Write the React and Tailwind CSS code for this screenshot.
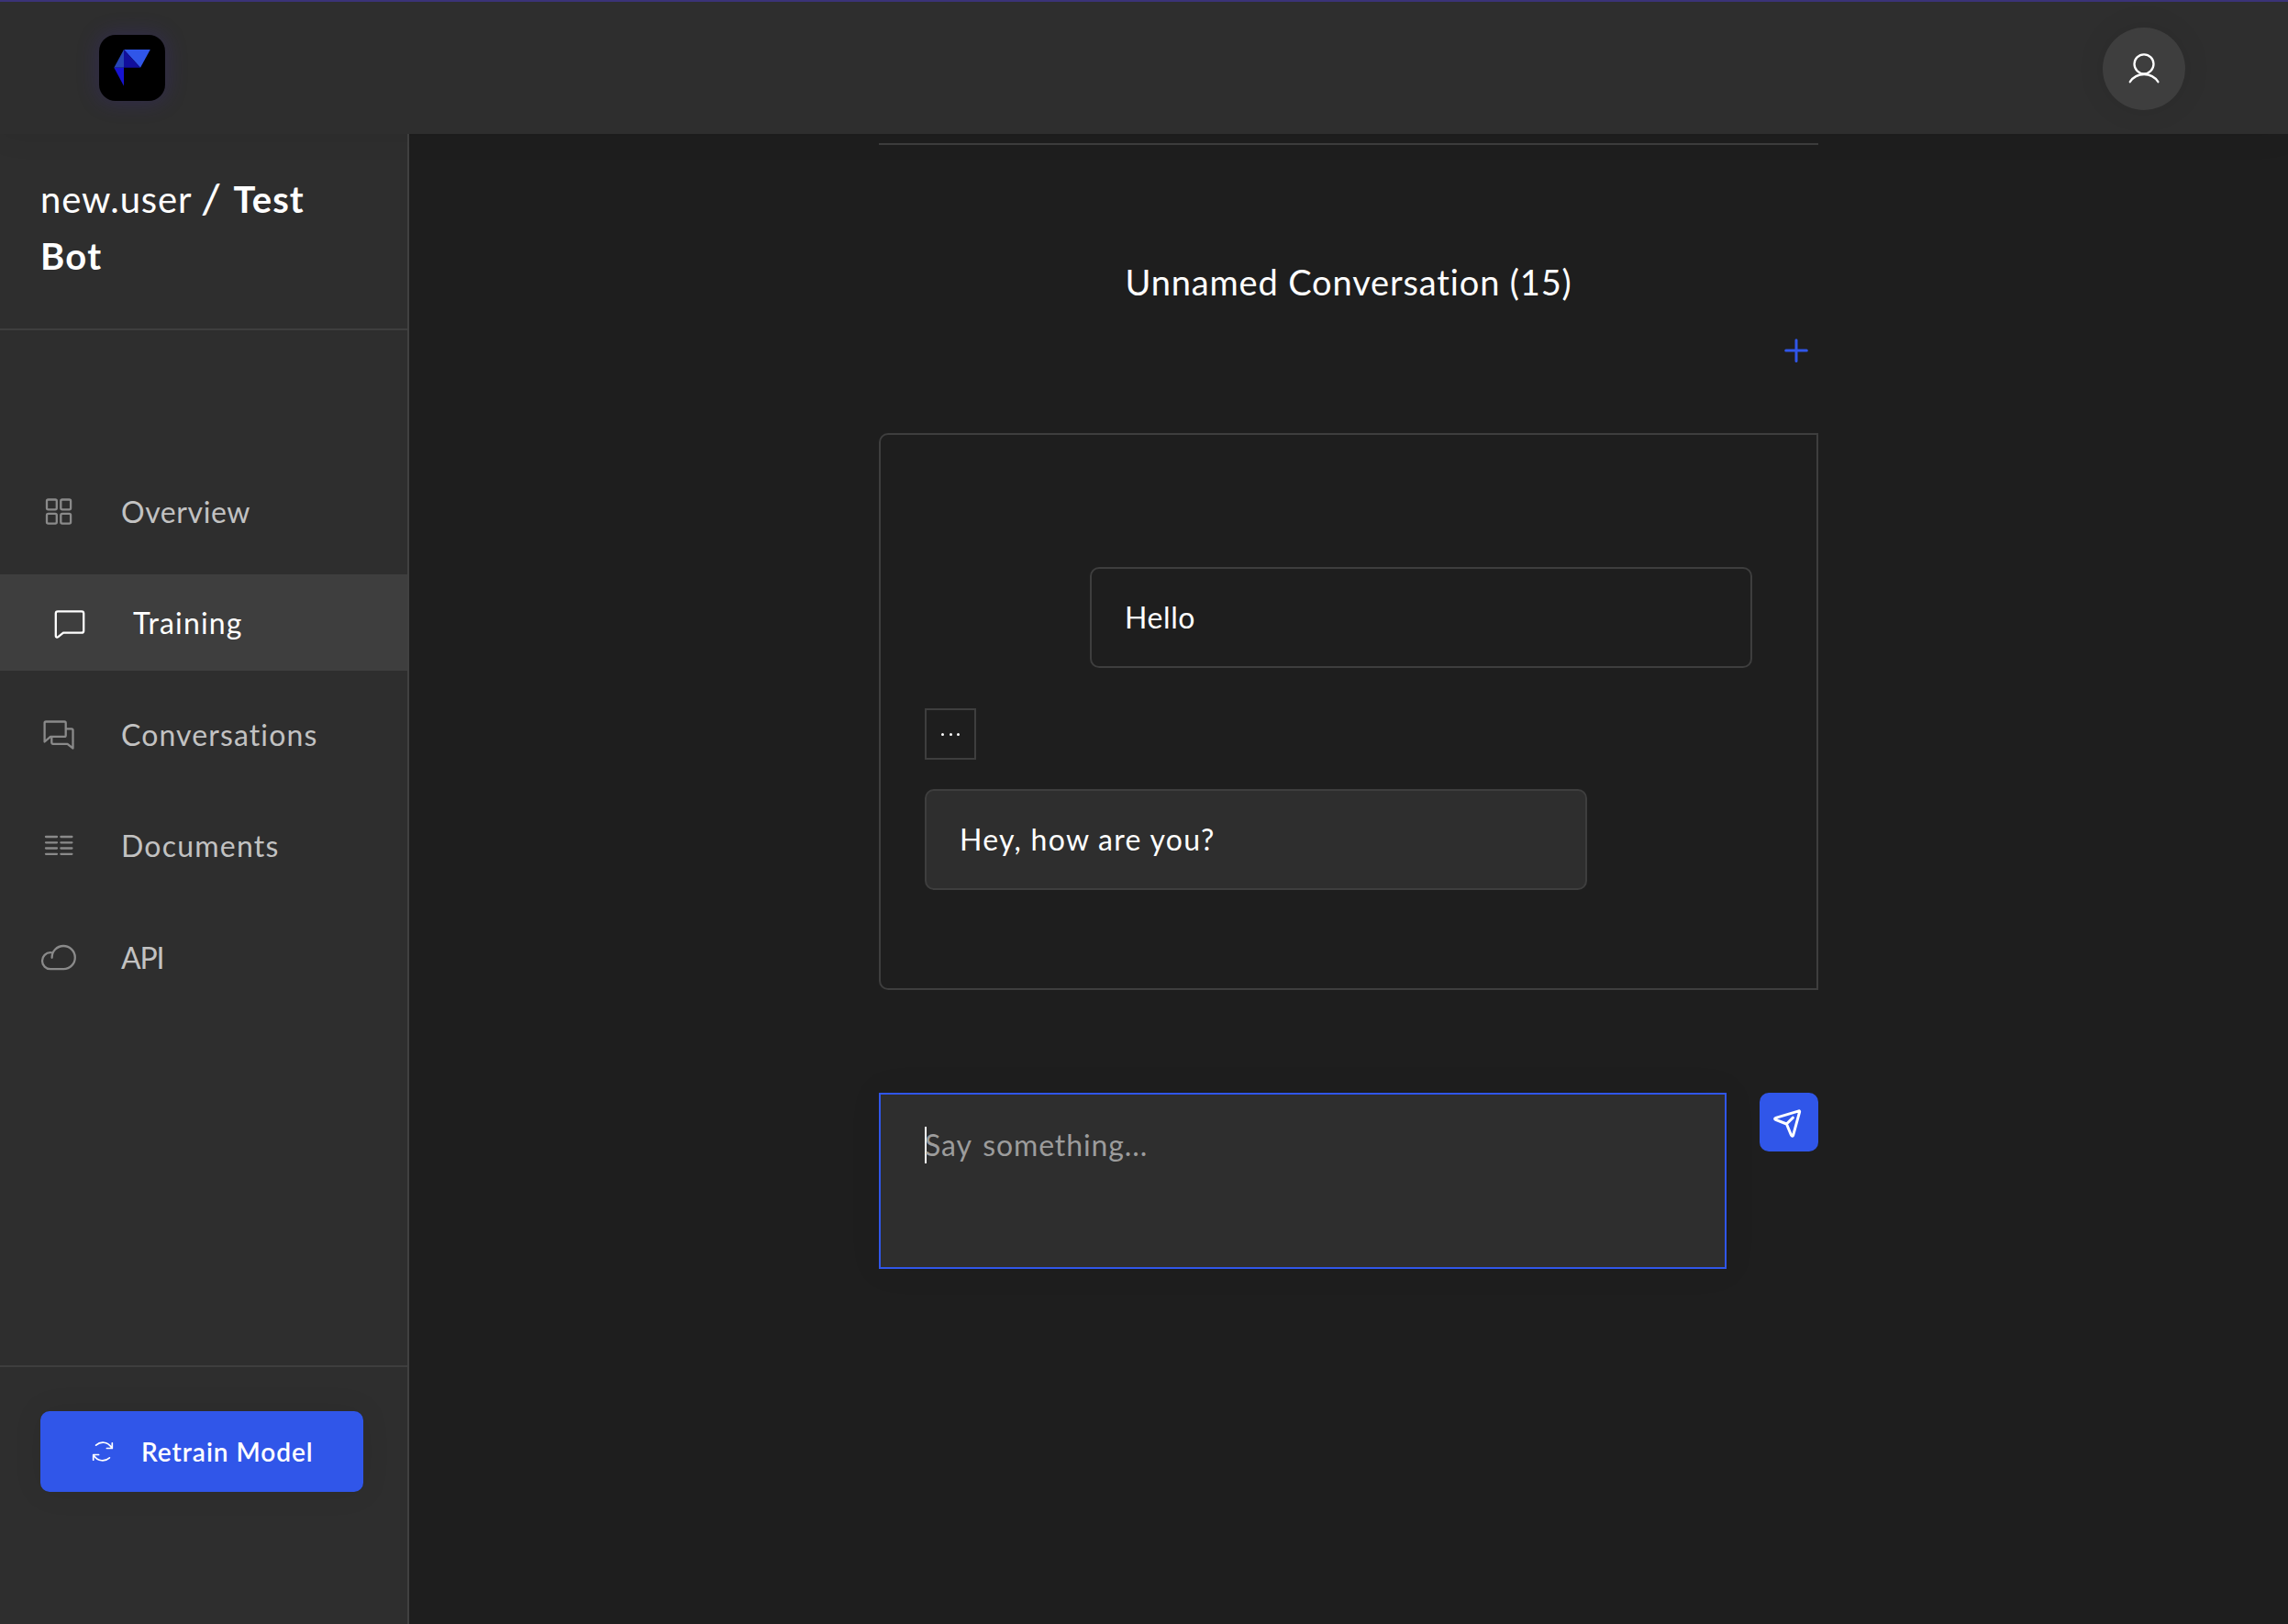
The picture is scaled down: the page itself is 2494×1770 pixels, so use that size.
import React from 'react';

const stroke = {
  fill: 'none',
  stroke: 'currentColor',
  strokeWidth: 2.3,
  strokeLinecap: 'round',
  strokeLinejoin: 'round',
};

const Logo = () => (
  <div className="flex h-[72px] w-[72px] items-center justify-center rounded-[18px] bg-black shadow-[0_0_22px_2px_rgba(60,40,150,0.3)]">
    <svg width="72" height="72" viewBox="108 38 72 72">
      <path d="M135 54L124.3 73.8H135z" fill="#2645b5" />
      <path d="M135 54h28.8L153 73.8z" fill="#3056e9" />
      <path d="M135 54l18 19.8H135z" fill="#110e9c" />
      <path d="M124.3 73.8H135v20z" fill="#1713d0" />
    </svg>
  </div>
);

const UserIcon = () => (
  <svg width="90" height="90" viewBox="2292 30 90 90" {...stroke}>
    <circle cx="2337" cy="69.8" r="10.5" />
    <path d="M2321.8 89.2a18.4 18.4 0 0 1 30.6 0" />
  </svg>
);

const GridIcon = () => (
  <svg width="40" height="40" viewBox="44 536.5 40 40" {...stroke}>
    <rect x="51" y="544" width="10.8" height="10.8" rx="1.6" />
    <rect x="66.3" y="544" width="10.8" height="10.8" rx="1.6" />
    <rect x="51" y="559.3" width="10.8" height="10.8" rx="1.6" />
    <rect x="66.3" y="559.3" width="10.8" height="10.8" rx="1.6" />
  </svg>
);

const ChatIcon = () => (
  <svg width="40" height="40" viewBox="56 658 40 40" {...stroke}>
    <path d="M63 666.3h26a2.2 2.2 0 0 1 2.2 2.2v19a2.2 2.2 0 0 1-2.2 2.2H69l-5.6 4.5c-1.3 1-2.6.3-2.6-1v-24.7a2.2 2.2 0 0 1 2.2-2.2z" />
  </svg>
);

const ChatsIcon = () => (
  <svg width="40" height="40" viewBox="44 779.5 40 40" {...stroke}>
    <path d="M50 786h20.3a1.4 1.4 0 0 1 1.4 1.4v13.6a1.4 1.4 0 0 1-1.4 1.4H55l-6.4 5.6v-20.6a1.4 1.4 0 0 1 1.4-1.4z" />
    <path d="M72 793.8h6a1.5 1.5 0 0 1 1.5 1.5V815l-6-4.7H57.8a1.5 1.5 0 0 1-1.5-1.5V803" />
  </svg>
);

const ListIcon = () => (
  <svg width="40" height="40" viewBox="44 901 40 40" {...stroke}>
    <path d="M50 912h12M66.4 912h12M50 918.3h12M66.4 918.3h12M50 924.5h12M66.4 924.5h12M50 930.8h12M66.4 930.8h12" />
  </svg>
);

const CloudIcon = () => (
  <svg width="40" height="40" viewBox="44 1022.5 40 40" {...stroke}>
    <path d="M56.6 1043.3A12.6 12.6 0 1 1 69.3 1055.7H55a9 9 0 0 1 0-18q1.3 0 2.4.3" />
  </svg>
);

const SyncIcon = () => (
  <svg width="40" height="40" viewBox="92 1562 40 40" {...stroke} strokeWidth={1.7}>
    <path d="M104.6 1575.2c5-4.5 12.5-4.3 17.2 2.6M122.3 1572.8v5.7h-5.900" />
    <path d="M119.4 1588.8c-5 4.5-12.5 4.3-17.2-2.6M101.7 1591.2v-5.7h5.9" />
  </svg>
);

const PlusIcon = () => (
  <svg width="48" height="48" viewBox="1934 358 48 48" {...stroke} strokeWidth={3}>
    <path d="M1958 370.8v22.600M1946.700 382h22.600" />
  </svg>
);

const SendIcon = () => (
  <svg width="64" height="64" viewBox="1918 1191 64 64" {...stroke} strokeWidth={3}>
    <path d="M1960.800 1210.900L1935.600 1218.400c-1.300.4-1.300 1.400-.1 1.900L1947.400 1225l5.100 12.300c.5 1.200 1.800 1.100 2.200-.1L1961.600 1211.900c.2-.7-.1-1.200-.8-1zM1947.400 1225l7-6.800" />
  </svg>
);

const NAV = [
  { label: 'Overview', icon: <GridIcon />, spacing: 'tracking-[0.6px]' },
  { label: 'Training', icon: <ChatIcon />, spacing: 'tracking-[1.15px]', active: true },
  { label: 'Conversations', icon: <ChatsIcon />, spacing: 'tracking-[1.12px]' },
  { label: 'Documents', icon: <ListIcon />, spacing: 'tracking-[1.23px]' },
  { label: 'API', icon: <CloudIcon />, spacing: 'tracking-[-1.2px]' },
];

function NavItem({ label, icon, spacing, active }) {
  return (
    <div
      className={
        active
          ? 'flex h-[105px] items-center gap-[49px] bg-[#3e3e3e] pl-14 text-white'
          : 'flex h-[105px] items-center gap-12 pl-11 text-[#c2c2c2]'
      }
    >
      <span className={active ? 'text-white' : 'text-[#8a8a8a]'}>{icon}</span>
      <span className={`pt-0.5 text-[32px] ${spacing}`}>{label}</span>
    </div>
  );
}

function Sidebar() {
  return (
    <aside className="flex w-[446px] flex-col border-r-2 border-[#414141] bg-[#2e2e2e]">
      <div className="h-[214px] border-b-2 border-[#3e3e3e] pt-10 pl-11 text-[40px] leading-[62px]">
        <div className="whitespace-nowrap">
          <span className="tracking-[0.85px]">new.user</span>
          <span className="ml-3 inline-block scale-x-125 scale-y-110">/</span>
          <span className="ml-[15px] font-bold tracking-[1.1px]">Test</span>
        </div>
        <div className="font-bold tracking-[1.3px]">Bot</div>
      </div>
      <nav className="mt-36 flex flex-col gap-[16.5px]">
        {NAV.map((item) => (
          <NavItem key={item.label} {...item} />
        ))}
      </nav>
      <div className="mt-auto h-[282px] border-t-2 border-[#3e3e3e] pt-12 pl-11">
        <button className="flex h-[88px] w-[352px] items-center gap-[22px] rounded-[10px] bg-[#3056e9] pl-12 text-[28px] font-semibold tracking-[0.98px] text-white shadow-[0_0_32px_rgba(0,0,0,0.08)]">
          <SyncIcon />
          <span>Retrain Model</span>
        </button>
      </div>
    </aside>
  );
}

function Conversation() {
  return (
    <main className="flex-1">
      <div className="mx-auto flex w-[1024px] flex-col">
        <div className="mt-2.5 h-0.5 bg-[#3e3e3e]" />
        <h1 className="mt-[121px] text-center text-[38px] leading-[56px] tracking-[0.85px]">
          Unnamed Conversation (15)
        </h1>
        <button className="mt-[23px] self-end text-[#3056e9]">
          <PlusIcon />
        </button>
        <section className="mt-[66px] flex h-[607px] flex-col rounded-l-[10px] border-2 border-[#3e3e3e] pt-36 pr-[70px] pl-12">
          <div className="flex h-[110px] w-[722px] items-center self-end rounded-[10px] border-2 border-[#3e3e3e] pl-9 text-[32px] tracking-[0.6px]">
            Hello
          </div>
          <button className="mt-11 flex h-14 w-14 items-center justify-center gap-[5.3px] border-2 border-[#3e3e3e]">
            <span className="h-[3px] w-[3px] rounded-full bg-white" />
            <span className="h-[3px] w-[3px] rounded-full bg-white" />
            <span className="h-[3px] w-[3px] rounded-full bg-white" />
          </button>
          <div className="mt-8 flex h-[110px] w-[722px] items-center rounded-[10px] border-2 border-[#3e3e3e] bg-[#2e2e2e] pl-9 text-[32px] tracking-[1.28px]">
            Hey, how are you?
          </div>
        </section>
        <div className="mt-28 flex items-start justify-between">
          <div className="flex h-48 w-[924px] items-start border-2 border-[#3056e9] bg-[#2e2e2e] pt-[35px] pl-12 shadow-[0_0_32px_rgba(0,0,0,0.08)]">
            <span className="-mr-0.5 h-10 w-0.5 bg-white" />
            <span className="text-[32px] leading-10 tracking-[0.9px] text-[#9c9c9c] [word-spacing:3px]">
              Say something...
            </span>
          </div>
          <button className="h-16 w-16 rounded-[10px] bg-[#3056e9] text-white">
            <SendIcon />
          </button>
        </div>
      </div>
    </main>
  );
}

export default function App() {
  return (
    <div className="flex h-[1770px] w-[2494px] flex-col overflow-hidden bg-[#1e1e1e] font-['Lato',sans-serif] text-white">
      <header className="z-10 flex h-[146px] items-center justify-between border-t-2 border-[#3b3378] bg-[#2e2e2e] pr-28 pl-[108px] shadow-[0_0_32px_rgba(0,0,0,0.08)]">
        <Logo />
        <div className="mt-0.5 h-[90px] w-[90px] rounded-full bg-[#3e3e3e] shadow-[0_0_32px_rgba(0,0,0,0.08)]">
          <UserIcon />
        </div>
      </header>
      <div className="flex flex-1">
        <Sidebar />
        <Conversation />
      </div>
    </div>
  );
}
